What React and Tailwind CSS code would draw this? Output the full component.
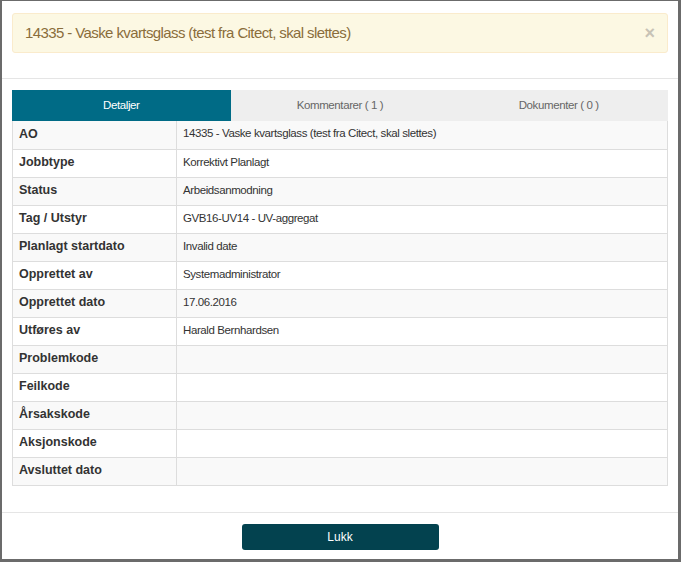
import React, { useState } from "react";

const rows = [
  ["AO", "14335 - Vaske kvartsglass (test fra Citect, skal slettes)"],
  ["Jobbtype", "Korrektivt Planlagt"],
  ["Status", "Arbeidsanmodning"],
  ["Tag / Utstyr", "GVB16-UV14 - UV-aggregat"],
  ["Planlagt startdato", "Invalid date"],
  ["Opprettet av", "Systemadministrator"],
  ["Opprettet dato", "17.06.2016"],
  ["Utføres av", "Harald Bernhardsen"],
  ["Problemkode", ""],
  ["Feilkode", ""],
  ["Årsakskode", ""],
  ["Aksjonskode", ""],
  ["Avsluttet dato", ""],
];

const tabs = ["Detaljer", "Kommentarer ( 1 )", "Dokumenter ( 0 )"];

export default function App() {
  const [active, setActive] = useState(0);

  return (
    <div
      className="w-[681px] h-[562px] bg-[#6b6b6b] pl-[2px] pr-[3px] pt-px pb-[3px]"
      style={{ fontFamily: '"Liberation Sans", Arial, sans-serif' }}
    >
      <div className="h-full bg-white flex flex-col">
        {/* Header */}
        <div className="px-[10px] pt-[12px] border-b border-[#e5e5e5] h-[78px]">
          <div className="flex items-center justify-between h-[40px] bg-[#fcf8e3] border border-[#faebcc] rounded-[3px] pl-[12px] pr-[12px]">
            <span className="text-[15px] text-[#8a6d3b] tracking-[-0.6px]">
              14335 - Vaske kvartsglass (test fra Citect, skal slettes)
            </span>
            <span className="text-[18px] font-bold text-[#c8c3b6] leading-none">×</span>
          </div>
        </div>

        {/* Body */}
        <div className="px-[10px] pt-[11px] h-[433px]">
          <div className="grid grid-cols-3 h-[31px] bg-[#eeeeee]">
            {tabs.map((t, i) => (
              <button
                key={t}
                onClick={() => setActive(i)}
                className={
                  i === active
                    ? "bg-[#006b86] text-white text-[11.5px] tracking-[-0.4px]"
                    : "text-[#666666] text-[11.5px] tracking-[-0.4px]"
                }
              >
                {t}
              </button>
            ))}
          </div>
          <div className="border border-[#dddddd] border-t-0">
            {rows.map(([label, value], i) => (
              <div
                key={label}
                className={
                  "flex h-[28px] text-[#333333] border-t border-[#dddddd] first:border-t-0 " +
                  (i % 2 === 0 ? "bg-[#f9f9f9]" : "bg-white")
                }
              >
                <div className="w-[164px] shrink-0 pl-[6px] pb-[2px] flex items-center text-[12.5px] font-bold border-r border-[#dddddd]">
                  {label}
                </div>
                <div className="flex-1 pl-[6px] pb-[2px] flex items-center text-[11.5px] tracking-[-0.4px]">
                  {value}
                </div>
              </div>
            ))}
          </div>
        </div>

        {/* Footer */}
        <div className="border-t border-[#e5e5e5] flex-1 flex justify-center pt-[11px]">
          <button className="w-[197px] h-[26px] bg-[#03424f] rounded-[3px] text-white text-[12px]">
            Lukk
          </button>
        </div>
      </div>
    </div>
  );
}
